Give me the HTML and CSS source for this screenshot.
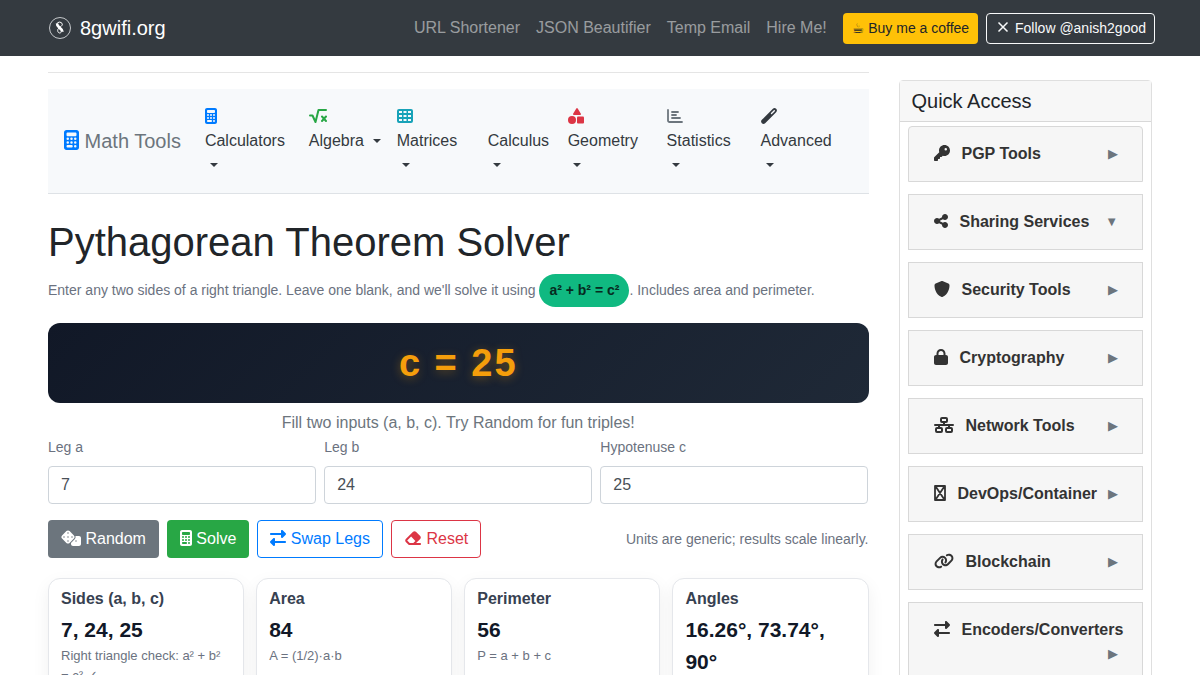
FILE: index.html
```html
<!DOCTYPE html>
<html lang="en">
<head>
    <meta charset="UTF-8">
    <title>Pythagorean Theorem Solver</title>
    <meta name="viewport" content="width=device-width, initial-scale=1.0">
    <link rel="stylesheet" href="styles.css">
</head>
<body>
<svg class="sprite" aria-hidden="true">
    <symbol id="calculator" viewBox="0 0 384 512"><path d="M64 0C28.7 0 0 28.7 0 64V448c0 35.3 28.7 64 64 64H320c35.3 0 64-28.7 64-64V64c0-35.3-28.7-64-64-64H64zM96 64H288c17.7 0 32 14.3 32 32v32c0 17.7-14.3 32-32 32H96c-17.7 0-32-14.3-32-32V96c0-17.7 14.3-32 32-32zm32 160a32 32 0 1 1 -64 0 32 32 0 1 1 64 0zM96 352a32 32 0 1 1 0-64 32 32 0 1 1 0 64zM64 416c0-17.7 14.3-32 32-32h96c17.7 0 32 14.3 32 32s-14.3 32-32 32H96c-17.7 0-32-14.3-32-32zM192 256a32 32 0 1 1 0-64 32 32 0 1 1 0 64zm32 64a32 32 0 1 1 -64 0 32 32 0 1 1 64 0zm64-64a32 32 0 1 1 0-64 32 32 0 1 1 0 64zm32 64a32 32 0 1 1 -64 0 32 32 0 1 1 64 0zM288 448a32 32 0 1 1 0-64 32 32 0 1 1 0 64z"/></symbol>
    <symbol id="exchange" viewBox="0 0 512 512"><path d="M32 96l320 0V32c0-12.9 7.8-24.6 19.8-29.6s25.7-2.2 34.9 6.9l96 96c6 6 9.4 14.1 9.4 22.6s-3.4 16.6-9.4 22.6l-96 96c-9.2 9.2-22.9 11.9-34.9 6.9s-19.8-16.6-19.8-29.6V160L32 160c-17.7 0-32-14.3-32-32s14.3-32 32-32zM480 352c17.7 0 32 14.3 32 32s-14.3 32-32 32H160v64c0 12.9-7.8 24.6-19.8 29.6s-25.7 2.2-34.9-6.9l-96-96c-6-6-9.4-14.1-9.4-22.6s3.4-16.6 9.4-22.6l96-96c9.2-9.2 22.9-11.9 34.9-6.9s19.8 16.6 19.8 29.6l0 64H480z"/></symbol>
</svg>

<header class="topbar">
    <a class="brand" href="#">
        <svg class="logo" viewBox="0 0 30 30" aria-hidden="true">
            <circle cx="15" cy="15" r="10.5" fill="none" stroke="#c4c7ca"/>
            <path d="M11.800 11.200a2.800 2.600 0 0 1 5.500 0c0 1.200-.8 1.900-1.600 2.400l-1.900 1.600c-.8.700-1.100 1.400-1.100 2.200 0 1.500.8 2.600 2 2.600 1 0 1.500-.6 1.500-1.400 0-1-.7-1.800-2-2.900-1.500-1.300-2.400-2.500-2.400-4.500z" fill="none" stroke="#fff" stroke-width="1"/>
            <path d="M12 10.500c0 2 1.200 3 2.800 4.200 1.700 1.300 2.700 2.300 2.700 4" fill="none" stroke="#fff" stroke-width="2.600"/>
        </svg>
        8gwifi.org
    </a>
    <nav class="topnav">
        <a href="#">URL Shortener</a>
        <a href="#">JSON Beautifier</a>
        <a href="#">Temp Email</a>
        <a href="#">Hire Me!</a>
        <a class="btn btn-sm btn-coffee" href="#"><span class="cup">☕&#xFE0E;</span> Buy me a coffee</a>
        <a class="btn btn-sm btn-follow" href="#">
            <svg class="w16" viewBox="0 0 16 16" aria-hidden="true"><path d="M3.500 2.500l9 9M12.500 2.500l-9 9" fill="none" stroke="currentColor" stroke-width="1.500"/></svg>
            Follow @anish2good</a>
    </nav>
</header>

<div class="row">
    <main class="content">
        <hr>
        <nav class="mathbar">
            <a class="mathbrand" href="#"><svg class="icon-lg blue" aria-hidden="true"><use href="#calculator"/></svg> Math Tools</a>
            <div class="mathmenu">
                <a href="#"><span class="slot blue"><svg class="w12" aria-hidden="true"><use href="#calculator"/></svg></span>Calculators <i class="caret"></i></a>
                <a href="#"><span class="slot green"><svg class="w18" viewBox="0 0 18 16" aria-hidden="true"><path d="M1 7.500h2.500l3 6.500 3-12H17M13 8.500l4 4.500M17 8.500l-4 4.500" fill="none" stroke="currentColor" stroke-width="2" stroke-linecap="round" stroke-linejoin="round"/></svg></span>Algebra <i class="caret"></i></a>
                <a href="#"><span class="slot teal"><svg class="w16" viewBox="0 0 16 16" aria-hidden="true"><path fill-rule="evenodd" d="M2 1h12a2 2 0 0 1 2 2v10a2 2 0 0 1-2 2H2a2 2 0 0 1-2-2V3a2 2 0 0 1 2-2zM2 3v2h3V3zm4.500 0v2h3V3zM11 3v2h3V3zM2 7v2h3V7zm4.500 0v2h3V7zM11 7v2h3V7zm-9 4v2h3v-2zm4.500 0v2h3v-2zm4.500 0v2h3v-2z"/></svg></span>Matrices <i class="caret"></i></a>
                <a href="#"><span class="slot"></span>Calculus <i class="caret"></i></a>
                <a href="#"><span class="slot red"><svg class="w16" viewBox="0 0 16 16" aria-hidden="true"><path d="M8.300.5a.8.8 0 0 1 1.400 0l3.200 5.300a.8.8 0 0 1-.7 1.200H5.800a.8.8 0 0 1-.7-1.200z"/><circle cx="4" cy="12" r="4"/><rect x="9" y="8.500" width="7" height="7" rx="1"/></svg></span>Geometry <i class="caret"></i></a>
                <a href="#"><span class="slot gray"><svg class="w16" viewBox="0 0 16 16" aria-hidden="true"><path d="M1 2v10.500a1.500 1.500 0 0 0 1.500 1.500H15M5 4h6M5 7h4M5 10h8" fill="none" stroke="currentColor" stroke-width="1.800" stroke-linecap="round"/></svg></span>Statistics <i class="caret"></i></a>
                <a href="#"><span class="slot dark"><svg class="w16" viewBox="0 0 16 16" aria-hidden="true"><path d="M2.500 13.500l11-11" fill="none" stroke="currentColor" stroke-width="4.600" stroke-linecap="round"/><path d="M10.500 5.500l2.800-2.800" fill="none" stroke="#f7f9fb" stroke-width="1.400" stroke-linecap="round"/></svg></span>Advanced <i class="caret"></i></a>
            </div>
        </nav>

        <h1>Pythagorean Theorem Solver</h1>
        <p class="lead">Enter any two sides of a right triangle. Leave one blank, and we'll solve it using <span class="pill">a² + b² = c²</span>. Includes area and perimeter.</p>

        <output class="display">c = 25</output>
        <p class="hint">Fill two inputs (a, b, c). Try Random for fun triples!</p>

        <form>
            <div class="fields">
                <div>
                    <label for="legA">Leg a</label>
                    <input id="legA" type="text" value="7">
                </div>
                <div>
                    <label for="legB">Leg b</label>
                    <input id="legB" type="text" value="24">
                </div>
                <div>
                    <label for="hypC">Hypotenuse c</label>
                    <input id="hypC" type="text" value="25">
                </div>
            </div>
            <div class="actions">
                <button type="button" class="btn btn-random"><svg class="w20" viewBox="0 0 640 512" aria-hidden="true"><path d="M274.9 34.3c-28.1-28.1-73.7-28.1-101.8 0L34.3 173.1c-28.1 28.1-28.1 73.7 0 101.8L173.1 413.7c28.1 28.1 73.7 28.1 101.8 0L413.7 274.9c28.1-28.1 28.1-73.7 0-101.8L274.9 34.3zM200 224a24 24 0 1 1 48 0 24 24 0 1 1 -48 0zM96 200a24 24 0 1 1 0 48 24 24 0 1 1 0-48zM224 376a24 24 0 1 1 0-48 24 24 0 1 1 0 48zM352 200a24 24 0 1 1 0 48 24 24 0 1 1 0-48zM224 120a24 24 0 1 1 0-48 24 24 0 1 1 0 48zm96 328c0 35.3 28.7 64 64 64H576c35.3 0 64-28.7 64-64V256c0-35.3-28.7-64-64-64H461.7c11.6 36 3.1 77-25.4 105.5L320 413.8V448zM480 328a24 24 0 1 1 0 48 24 24 0 1 1 0-48z"/></svg> Random</button>
                <button type="button" class="btn btn-solve"><svg class="w12" aria-hidden="true"><use href="#calculator"/></svg> Solve</button>
                <button type="button" class="btn btn-swap"><svg class="w16" aria-hidden="true"><use href="#exchange"/></svg> Swap Legs</button>
                <button type="button" class="btn btn-reset"><svg class="w18" viewBox="0 0 576 512" aria-hidden="true"><path d="M290.7 57.4L57.4 290.7c-25 25-25 65.5 0 90.5l80 80c12 12 28.3 18.7 45.3 18.7H288h9.4H512c17.7 0 32-14.3 32-32s-14.3-32-32-32H387.9L518.6 285.3c25-25 25-65.5 0-90.5L381.3 57.4c-25-25-65.5-25-90.5 0zM297.4 416H288l-105.4 0-80-80L227.3 211.3 364.7 348.7 297.4 416z"/></svg> Reset</button>
                <span class="note">Units are generic; results scale linearly.</span>
            </div>
        </form>

        <section class="results">
            <div class="result">
                <h2>Sides (a, b, c)</h2>
                <div class="value">7, 24, 25</div>
                <p>Right triangle check: a² + b² = c² ✓</p>
            </div>
            <div class="result">
                <h2>Area</h2>
                <div class="value">84</div>
                <p>A = (1/2)·a·b</p>
            </div>
            <div class="result">
                <h2>Perimeter</h2>
                <div class="value">56</div>
                <p>P = a + b + c</p>
            </div>
            <div class="result">
                <h2>Angles</h2>
                <div class="value">16.26°, 73.74°, 90°</div>
            </div>
        </section>
    </main>

    <aside class="sidebar">
        <div class="quick">
            <h2>Quick Access</h2>
            <div class="quicklist">
                <button type="button"><span class="name"><svg class="w16" viewBox="0 0 512 512" aria-hidden="true"><path d="M336 352c97.2 0 176-78.8 176-176S433.2 0 336 0S160 78.8 160 176c0 18.7 2.9 36.8 8.3 53.7L7 391c-4.5 4.5-7 10.6-7 17v80c0 13.3 10.7 24 24 24h80c13.3 0 24-10.7 24-24V448h40c13.3 0 24-10.7 24-24V384h40c6.4 0 12.5-2.5 17-7l33.3-33.3c16.9 5.4 35 8.3 53.7 8.3zM376 96a40 40 0 1 1 0 80 40 40 0 1 1 0-80z"/></svg>PGP Tools</span><span class="arrow">▶</span></button>
                <button type="button"><span class="name"><svg class="w14" viewBox="0 0 448 512" aria-hidden="true"><path d="M352 224c53 0 96-43 96-96s-43-96-96-96s-96 43-96 96c0 4 .2 8 .7 11.900l-94.100 47C145.400 170.200 121.900 160 96 160c-53 0-96 43-96 96s43 96 96 96c25.900 0 49.400-10.200 66.600-26.900l94.100 47c-.5 3.900-.7 7.800-.7 11.900c0 53 43 96 96 96s96-43 96-96s-43-96-96-96c-25.900 0-49.400 10.200-66.600 26.900l-94.100-47c.5-3.900 .7-7.800 .7-11.900s-.2-8-.7-11.900l94.100-47C302.600 213.800 326.100 224 352 224z"/></svg>Sharing Services</span><span class="arrow">▼</span></button>
                <button type="button"><span class="name"><svg class="w16" viewBox="0 0 512 512" aria-hidden="true"><path d="M256 0c4.6 0 9.2 1 13.4 2.9L457.7 82.800c22 9.300 38.400 31 38.300 57.200c-.5 99.200-41.300 280.700-213.600 363.200c-16.700 8-36.100 8-52.800 0C57.300 420.700 16.500 239.200 16 140c-.1-26.200 16.300-47.900 38.300-57.200L242.700 2.900C246.800 1 251.400 0 256 0z"/></svg>Security Tools</span><span class="arrow">▶</span></button>
                <button type="button"><span class="name"><svg class="w14" viewBox="0 0 448 512" aria-hidden="true"><path d="M144 144v48H304V144c0-44.200-35.800-80-80-80s-80 35.800-80 80zM80 192V144C80 64.500 144.500 0 224 0s144 64.500 144 144v48h16c35.300 0 64 28.700 64 64V448c0 35.300-28.700 64-64 64H64c-35.300 0-64-28.700-64-64V256c0-35.300 28.700-64 64-64H80z"/></svg>Cryptography</span><span class="arrow">▶</span></button>
                <button type="button"><span class="name"><svg class="w20" viewBox="0 0 20 16" aria-hidden="true"><g fill="none" stroke="currentColor" stroke-width="2" stroke-linecap="round"><rect x="7" y="1" width="6" height="4" rx="1"/><rect x="2" y="11" width="6" height="4" rx="1"/><rect x="12" y="11" width="6" height="4" rx="1"/><path d="M1 8h18M10 5v3M5 8v3M15 8v3"/></g></svg>Network Tools</span><span class="arrow">▶</span></button>
                <button type="button"><span class="name"><svg class="w12" viewBox="0 0 12 16" aria-hidden="true"><path d="M1 1h10v14H1zM2 2l8 12M10 2L2 14" fill="none" stroke="currentColor" stroke-width="1.800" stroke-linejoin="round"/></svg>DevOps/Container</span><span class="arrow">▶</span></button>
                <button type="button"><span class="name"><svg class="w20" viewBox="0 0 640 512" aria-hidden="true"><path d="M579.8 267.7c56.5-56.5 56.5-148 0-204.5c-50-50-128.8-56.5-186.3-15.4l-1.6 1.1c-14.4 10.3-17.7 30.3-7.4 44.6s30.3 17.7 44.6 7.4l1.6-1.1c32.1-22.9 76-19.3 103.800 8.600c31.500 31.500 31.500 82.500 0 114L422.300 334.800c-31.500 31.500-82.500 31.500-114 0c-27.900-27.900-31.500-71.800-8.600-103.800l1.100-1.600c10.300-14.400 6.900-34.400-7.400-44.600s-34.400-6.900-44.600 7.400l-1.100 1.600C206.500 251.200 213 330 263 380c56.500 56.500 148 56.500 204.500 0L579.800 267.700zM60.200 244.300c-56.500 56.500-56.500 148 0 204.500c50 50 128.800 56.500 186.300 15.400l1.600-1.100c14.400-10.300 17.700-30.300 7.400-44.600s-30.300-17.700-44.600-7.400l-1.600 1.100c-32.100 22.900-76 19.300-103.800-8.600C74 372 74 321 105.500 289.500L217.700 177.200c31.500-31.500 82.500-31.500 114 0c27.900 27.900 31.500 71.800 8.600 103.900l-1.100 1.600c-10.300 14.400-6.900 34.400 7.400 44.600s34.400 6.900 44.600-7.400l1.100-1.600C433.500 260.800 427 182 377 132c-56.500-56.500-148-56.500-204.500 0L60.200 244.300z"/></svg>Blockchain</span><span class="arrow">▶</span></button>
                <button type="button"><span class="name"><svg class="w16" aria-hidden="true"><use href="#exchange"/></svg>Encoders/Converters</span><span class="arrow">▶</span></button>
            </div>
        </div>
    </aside>
</div>
</body>
</html>
```
FILE: styles.css
```css
* {
    box-sizing: border-box;
}
body {
    margin: 0;
    background-color: #fff;
    color: #212529;
    font-family: "Liberation Sans", Arial, sans-serif;
    font-size: 16px;
    line-height: 24px;
}
a {
    color: inherit;
    text-decoration: none;
}
svg {
    fill: currentColor;
    height: 16px;
    vertical-align: -2px;
}
.sprite {
    display: none;
}
.w12 { width: 12px; }
.w14 { width: 14px; }
.w16 { width: 16px; }
.w18 { width: 18px; }
.w20 { width: 20px; }
.blue { color: #007bff; }
.green { color: #28a745; }
.teal { color: #17a2b8; }
.red { color: #dc3545; }
.gray { color: #6c757d; }
.dark { color: #343a40; }

.topbar {
    display: flex;
    justify-content: space-between;
    align-items: center;
    min-height: 56px;
    padding: 0 45px;
    background-color: #343a40;
}
.brand {
    display: flex;
    align-items: center;
    gap: 5px;
    color: #fff;
    font-size: 20px;
}
.logo {
    width: 30px;
    height: 30px;
}
.topnav {
    display: flex;
    align-items: center;
    gap: 16px;
    color: rgba(255, 255, 255, 0.5);
}
.topnav .btn + .btn {
    margin-left: -8px;
}

.btn {
    padding: 6px 12px;
    border: 1px solid transparent;
    border-radius: 4px;
    background-color: #fff;
    font: inherit;
    white-space: nowrap;
    cursor: pointer;
}
.btn-sm {
    padding: 4px 8px;
    font-size: 14px;
    line-height: 21px;
}
.btn-coffee {
    background-color: #ffc107;
    color: #212529;
}
.cup {
    font-family: "DejaVu Sans", sans-serif;
}
.btn-follow {
    background-color: transparent;
    border-color: #f8f9fa;
    color: #f8f9fa;
}
.btn-follow svg {
    vertical-align: -3px;
}
.btn-random {
    background-color: #6c757d;
    color: #fff;
}
.btn-solve {
    background-color: #28a745;
    color: #fff;
}
.btn-swap {
    border-color: #007bff;
    color: #007bff;
}
.btn-reset {
    border-color: #dc3545;
    color: #dc3545;
}

.row {
    display: flex;
    padding: 0 33px;
}
.content {
    width: 75%;
    padding: 0 15px;
}
.sidebar {
    width: 25%;
    padding: 24px 15px;
}
hr {
    margin: 16px 0;
    border: 0;
    border-top: 1px solid #e5e5e5;
}

.mathbar {
    display: flex;
    align-items: center;
    gap: 24px;
    padding: 8px 16px;
    background-color: #f7f9fb;
    border-bottom: 1px solid #dee2e6;
}
.mathbrand {
    color: #6c757d;
    font-size: 20px;
    white-space: nowrap;
}
.icon-lg {
    width: 15px;
    height: 20px;
}
.mathmenu {
    flex: 1;
    display: grid;
    grid-template-columns: 104fr 88fr 91fr 80fr 99fr 94fr 92fr;
    color: #343a40;
}
.mathmenu a {
    padding: 8px 13px 8px 0;
}
.slot {
    display: block;
    height: 24px;
}
.caret {
    display: inline-block;
    margin: 0 1px 0 5px;
    vertical-align: 3px;
    border: 4px solid transparent;
    border-top-color: currentColor;
    border-bottom: 0;
}

h1 {
    margin: 24px 0 8px;
    font-size: 40px;
    font-weight: 400;
    line-height: 48px;
}
.lead {
    margin: 0 0 16px;
    color: #6b7280;
    font-size: 14px;
    line-height: 33px;
}
.pill {
    display: inline-block;
    padding: 0 10px;
    border-radius: 999px;
    background-color: #10b981;
    color: #062b1f;
    font-weight: 700;
}
.display {
    display: block;
    padding: 16px;
    border-radius: 12px;
    background: linear-gradient(135deg, #111827, #1f2937);
    color: #f59e0b;
    font-size: 38px;
    font-weight: 700;
    line-height: 48px;
    letter-spacing: 2px;
    text-align: center;
    text-shadow: 0 2px 10px rgba(245, 158, 11, 0.35);
}
.hint {
    margin: 8px 0 0;
    color: #6c757d;
    text-align: center;
}

.fields {
    display: grid;
    grid-template-columns: repeat(3, 1fr);
    gap: 8px;
}
.fields label {
    display: block;
    margin-bottom: 7px;
    color: #6b7280;
    font-size: 14px;
}
.fields input {
    display: block;
    width: 100%;
    height: 38px;
    padding: 6px 12px;
    border: 1px solid #ced4da;
    border-radius: 4px;
    color: #495057;
    font: inherit;
}
.actions {
    display: flex;
    align-items: center;
    gap: 8px;
    margin: 16px 0 20px;
}
.note {
    margin-left: auto;
    color: #6b7280;
    font-size: 14px;
}

.results {
    display: grid;
    grid-template-columns: repeat(4, 1fr);
    gap: 12px;
}
.result {
    padding: 8px 12px;
    border: 1px solid #e5e7eb;
    border-radius: 12px;
    background-color: #fff;
    box-shadow: 0 6px 18px rgba(0, 0, 0, 0.06);
}
.result h2 {
    margin: 0 0 3px;
    color: #374151;
    font-size: 16px;
}
.value {
    color: #111827;
    font-size: 21px;
    font-weight: 700;
    line-height: 32px;
}
.result p {
    margin: 0;
    color: #6b7280;
    font-size: 13px;
    line-height: 20px;
}

.quick {
    border: 1px solid #dfdfdf;
    border-radius: 4px;
}
.quick h2 {
    margin: 0;
    padding: 8px 12px;
    border-bottom: 1px solid #d8d8d8;
    background-color: #f7f7f7;
    font-size: 20px;
    font-weight: 400;
}
.quicklist {
    display: flex;
    flex-direction: column;
    gap: 12px;
    padding: 4px 8px;
}
.quicklist button {
    display: flex;
    flex-wrap: wrap;
    padding: 15px 24px 15px 25px;
    border: 1px solid #d8d8d8;
    background-color: #f6f6f6;
    color: #333;
    font: inherit;
    font-weight: 700;
    cursor: pointer;
}
.quicklist button:first-child {
    border-radius: 4px 4px 0 0;
}
.name {
    white-space: nowrap;
}
.name svg {
    margin-right: 12px;
}
.arrow {
    margin-left: auto;
    color: #6c757d;
    font-size: 13px;
    font-weight: 400;
}
```
